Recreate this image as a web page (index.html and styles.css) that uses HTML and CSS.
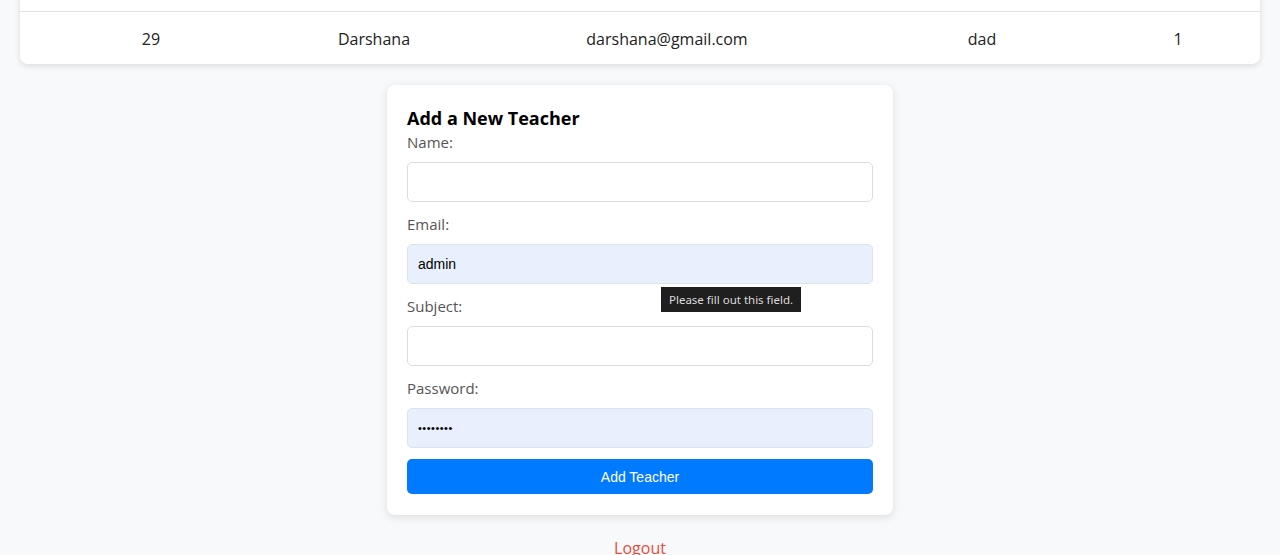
FILE: index.html
```html
<!DOCTYPE html>
<html>
<head>
<meta charset="utf-8">
<link rel="stylesheet" href="styles.css">
</head>
<body>
<div class="page">
  <div class="table-card">
    <table class="teachers">
      <colgroup>
        <col class="c-id"><col class="c-name"><col class="c-email"><col class="c-subject"><col class="c-count">
      </colgroup>
      <tbody>
        <tr><td>29</td><td>Darshana</td><td>darshana@gmail.com</td><td>dad</td><td>1</td></tr>
      </tbody>
    </table>
  </div>

  <form class="form-card">
    <h3 class="form-title">Add a New Teacher</h3>
    <label class="field-label">Name:</label>
    <input class="field" type="text">
    <label class="field-label">Email:</label>
    <div class="field-wrap">
      <input class="field autofill" type="text" value="admin">
      <div class="tooltip">Please fill out this field.</div>
    </div>
    <label class="field-label">Subject:</label>
    <input class="field" type="text">
    <label class="field-label">Password:</label>
    <input class="field autofill pw" type="password" value="password">
    <button class="submit" type="button">Add Teacher</button>
  </form>

  <a class="logout" href="#">Logout</a>
</div>
</body>
</html>
```

FILE: styles.css
```css
html, body {
  margin: 0;
  padding: 0;
  background: #f8f9fa;
  font-family: "Open Sans", "Noto Sans", sans-serif;
  color: #222;
  overflow: hidden;
}

.page {
  display: flex;
  flex-direction: column;
  align-items: center;
  padding: 0 20px;
}

.table-card {
  width: 1240px;
  margin-top: -10px;
  padding-top: 21px;
  background: #fff;
  border-radius: 8px;
  box-shadow: 0 2px 6px rgba(0, 0, 0, 0.12);
  overflow: hidden;
}

.teachers {
  width: 100%;
  border-collapse: collapse;
  font-size: 16px;
}

.c-id { width: 262px; }
.c-name { width: 184px; }
.c-email { width: 402px; }
.c-subject { width: 228px; }
.c-count { width: 164px; }

.teachers td {
  text-align: center;
  padding: 2px 0 0 0;
  height: 50px;
  font-weight: 400;
  color: #222;
}

.teachers tbody tr {
  border-top: 1px solid #e2e2e2;
}

.form-card {
  width: 466px;
  margin-top: 21px;
  padding: 20px 20px 21px;
  background: #fff;
  border-radius: 8px;
  box-shadow: 0 2px 8px rgba(0, 0, 0, 0.12);
  display: flex;
  flex-direction: column;
}

.form-title {
  margin: 0;
  font-size: 18px;
  font-weight: 700;
  color: #000;
  line-height: 26px;
}

.field-label {
  font-size: 15px;
  color: #555;
  line-height: 22px;
  margin-bottom: 9px;
}

.field-wrap {
  position: relative;
  display: flex;
  flex-direction: column;
}

.field {
  box-sizing: border-box;
  height: 40px;
  width: 100%;
  border: 1px solid #ddd;
  border-radius: 5px;
  padding: 0 10px;
  margin: 0 0 11px 0;
  font-family: "Liberation Sans", Arial, sans-serif;
  font-size: 14px;
  color: #000;
  background: #fff;
}

.autofill {
  background: #e8f0fe;
  border-color: #dbe3ef;
}

.pw {
  font-size: 11px;
  letter-spacing: 0.5px;
}

.tooltip {
  position: absolute;
  left: 254px;
  top: 43px;
  background: #1f1f1f;
  color: #dcdcdc;
  font-family: "Noto Sans", sans-serif;
  font-size: 11.5px;
  line-height: 25px;
  padding: 0 8px;
  white-space: nowrap;
}

.submit {
  height: 35px;
  border: none;
  border-radius: 5px;
  background: #007bff;
  color: #fff;
  font-family: "Liberation Sans", Arial, sans-serif;
  font-size: 14px;
}

.logout {
  margin-top: 22px;
  color: #e74c3c;
  font-size: 16px;
  text-decoration: none;
}
```
